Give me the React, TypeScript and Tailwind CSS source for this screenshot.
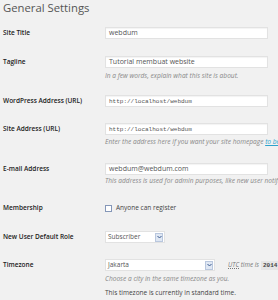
import React from 'react';

const font = { fontFamily: '"Open Sans", "Liberation Sans", sans-serif' };

const Label = ({ children }: { children: React.ReactNode }) => (
  <div className="w-[102px] h-[12px] flex items-center shrink-0 text-[6.5px] font-semibold text-[#222]">
    {children}
  </div>
);

const TextInput = ({ value, mono }: { value: string; mono?: boolean }) => (
  <div
    className={`w-[163px] h-[12px] bg-white border border-[#e2e2e2] shadow-[inset_0_1px_1px_rgba(0,0,0,0.05)] flex items-center pl-[3px] text-[#555] ${
      mono ? 'text-[6px] font-["Liberation_Mono",monospace]' : 'text-[7px]'
    }`}
  >
    {value}
  </div>
);

const Desc = ({ children, className = '' }: { children: React.ReactNode; className?: string }) => (
  <div className={`h-[8px] leading-[8px] text-[6.6px] italic text-[#888] whitespace-nowrap ${className}`}>
    {children}
  </div>
);

const SelectBox = ({ value, width }: { value: string; width: string }) => (
  <div className={`${width} h-[12px] bg-white border border-[#e2e2e2] flex items-center justify-between pl-[2px] pr-[1px]`}>
    <span className="text-[6.5px] text-[#555]">{value}</span>
    <span className="w-[8px] h-[9px] bg-[#dfe7f3] border border-[#b9c7de] flex items-center justify-center">
      <svg width="5" height="4" viewBox="0 0 5 4">
        <path d="M0.5 1 L2.5 3 L4.5 1" fill="none" stroke="#3b5a8f" strokeWidth="1" />
      </svg>
    </span>
  </div>
);

export default function App() {
  return (
    <div className="w-[278px] h-[300px] bg-[#f1f1f1] overflow-hidden pl-[3px]" style={font}>
      <div className="pt-[1px] h-[15px] leading-[14px] text-[11.3px] text-[#555]">General Settings</div>

      <div className="flex mt-[12px]">
        <Label>Site Title</Label>
        <TextInput value="webdum" />
      </div>

      <div className="flex mt-[17px]">
        <Label>Tagline</Label>
        <div>
          <TextInput value="Tutorial membuat website" />
          <Desc className="mt-[4px]">In a few words, explain what this site is about.</Desc>
        </div>
      </div>

      <div className="flex mt-[15px]">
        <Label>WordPress Address (URL)</Label>
        <TextInput value="http://localhost/webdum" mono />
      </div>

      <div className="flex mt-[16px]">
        <Label>Site Address (URL)</Label>
        <div>
          <TextInput value="http://localhost/webdum" mono />
          <Desc className="mt-[3px]">
            Enter the address here if you want your site homepage{' '}
            <span className="text-[#2ea2cc] underline">to be different</span>
          </Desc>
        </div>
      </div>

      <div className="flex mt-[17px]">
        <Label>E-mail Address</Label>
        <div>
          <TextInput value="webdum@webdum.com" />
          <Desc className="mt-[2px]">This address is used for admin purposes, like new user notification.</Desc>
        </div>
      </div>

      <div className="flex mt-[17px]">
        <Label>Membership</Label>
        <div className="h-[12px] flex items-center gap-[4px]">
          <span className="w-[7px] h-[7px] bg-white border border-[#8597b8]" />
          <span className="text-[6.5px] text-[#444]">Anyone can register</span>
        </div>
      </div>

      <div className="flex mt-[17px]">
        <Label>New User Default Role</Label>
        <SelectBox value="Subscriber" width="w-[60px]" />
      </div>

      <div className="flex mt-[16px]">
        <Label>Timezone</Label>
        <div>
          <div className="flex items-center whitespace-nowrap">
            <SelectBox value="Jakarta" width="w-[110px]" />
            <span className="ml-[13px] text-[6.3px] italic text-[#777]">
              <span className="underline decoration-dotted">UTC</span> time is
            </span>
            <span className="ml-[2px] px-[2px] bg-[#e5e5e5] text-[6px] text-[#444] font-bold font-['Liberation_Mono',monospace]">
              2014-11-20 10:32:11
            </span>
          </div>
          <Desc className="mt-[4px]">Choose a city in the same timezone as you.</Desc>
          <div className="mt-[6px] h-[8px] leading-[8px] text-[6.5px] text-[#444] whitespace-nowrap">
            This timezone is currently in standard time.
          </div>
        </div>
      </div>
    </div>
  );
}
